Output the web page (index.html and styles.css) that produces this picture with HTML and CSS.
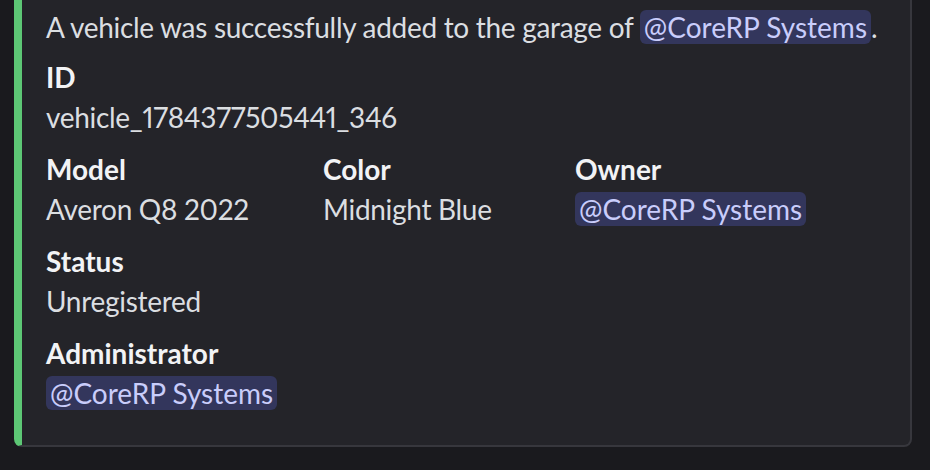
FILE: index.html
```html
<!DOCTYPE html>
<html lang="en">
<head>
    <meta charset="UTF-8">
    <title>Vehicle added</title>
    <link rel="stylesheet" href="styles.css">
</head>
<body>

<div class="chat">
    <div class="embed">
        <p class="embed-desc">A vehicle was successfully added to the garage of <span class="mention">@CoreRP Systems</span>.</p>
        <div class="embed-fields">
            <div class="field field-full">
                <div class="field-name">ID</div>
                <div class="field-value">vehicle_1784377505441_346</div>
            </div>
            <div class="field">
                <div class="field-name">Model</div>
                <div class="field-value">Averon Q8 2022</div>
            </div>
            <div class="field">
                <div class="field-name">Color</div>
                <div class="field-value">Midnight Blue</div>
            </div>
            <div class="field">
                <div class="field-name">Owner</div>
                <div class="field-value"><span class="mention">@CoreRP Systems</span></div>
            </div>
            <div class="field field-full">
                <div class="field-name">Status</div>
                <div class="field-value">Unregistered</div>
            </div>
            <div class="field field-full">
                <div class="field-name">Administrator</div>
                <div class="field-value"><span class="mention">@CoreRP Systems</span></div>
            </div>
        </div>
    </div>
</div>

</body>
</html>
```

FILE: styles.css
```css
:root {
    --bg-page: #1a1a1e;
    --bg-embed: #242429;
    --embed-border: #37373d;
    --accent: #5dc775;
    --text-normal: #dbdee1;
    --text-strong: #f2f3f5;
    --mention-bg: #33365c;
    --mention-text: #c9cdfb;
}
body {
    margin: 0;
    padding: 0;
    background-color: var(--bg-page);
    font-family: 'Lato', sans-serif;
    font-variant-numeric: proportional-nums;
    overflow: hidden;
}
.chat {
    padding: 0 18px 0 14px;
}
.embed {
    margin-top: -30px;
    background-color: var(--bg-embed);
    border: 2px solid var(--embed-border);
    border-left: 8px solid var(--accent);
    border-radius: 8px;
    padding: 37px 30px 34px 24px;
}
.embed-desc {
    margin: 0;
    font-size: 28px;
    line-height: 36px;
    letter-spacing: -0.3px;
    color: var(--text-normal);
    white-space: nowrap;
}
.mention {
    background-color: var(--mention-bg);
    color: var(--mention-text);
    border-radius: 6px;
    padding: 0 4px;
    letter-spacing: 0;
}
.embed-fields {
    display: grid;
    grid-template-columns: 261px 236px 1fr;
    column-gap: 16px;
    row-gap: 16px;
    margin-top: 14px;
}
.field-full {
    grid-column: 1 / 4;
}
.field-name {
    font-size: 28px;
    line-height: 36px;
    font-weight: 700;
    color: var(--text-strong);
    margin-bottom: 4px;
}
.field-value {
    font-size: 28px;
    line-height: 36px;
    letter-spacing: -0.3px;
    color: var(--text-normal);
    white-space: nowrap;
}
```
